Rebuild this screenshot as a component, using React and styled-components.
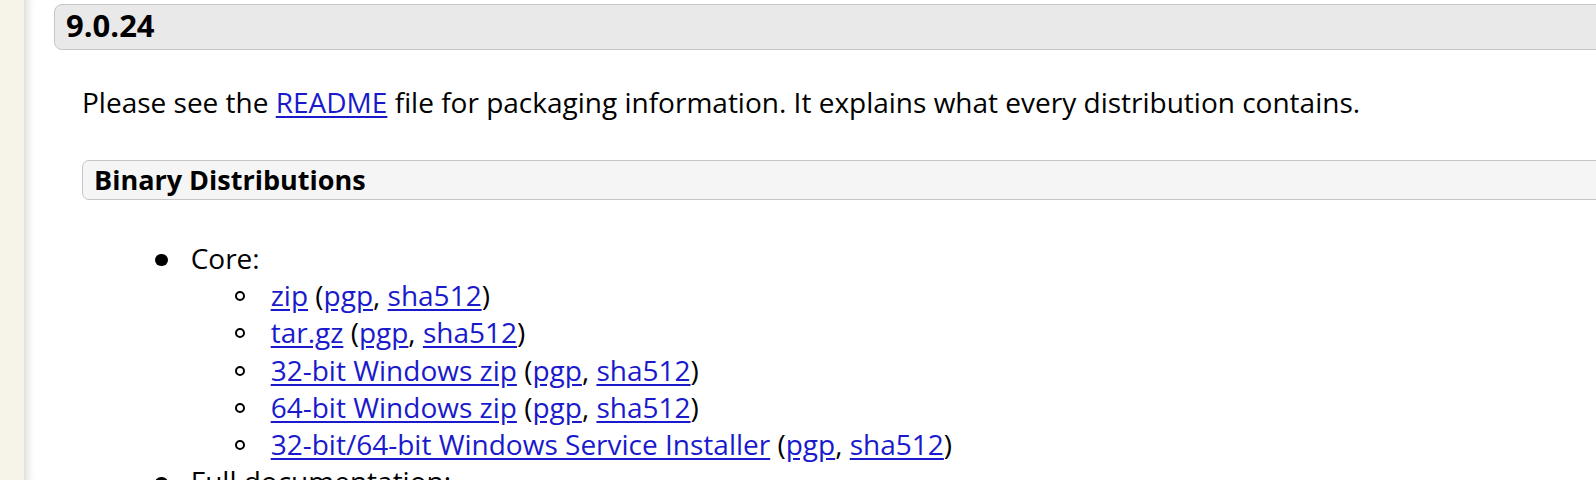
import React from "react";
import styled, { createGlobalStyle } from "styled-components";

const Global = createGlobalStyle`
  html, body { margin: 0; padding: 0; background: #fff; }
  body {
    font-family: "Open Sans", "Noto Sans", sans-serif;
    font-size: 28px;
    color: #000;
    overflow: hidden;
  }
`;

const Page = styled.div`
  display: flex;
  width: 1596px;
  height: 480px;
  overflow: hidden;
`;

const Sidebar = styled.div`
  flex: 0 0 24px;
  background: #f6f3e9;
`;

const Main = styled.main`
  flex: 1 1 auto;
  min-width: 0;
  background: #fff;
  box-shadow: inset 10px 0 9px -7px rgba(0, 0, 0, 0.16);
  padding: 4px 0 0 30px;
  margin-right: -60px;
`;

const VersionTitle = styled.h3`
  margin: 0;
  padding: 0 11px 3px;
  font-size: 31px;
  font-weight: 700;
  line-height: 41px;
  background: #e9e9e9;
  border: 1px solid #c6c6c6;
  border-radius: 8px 0 0 8px;
`;

const Section = styled.div`
  padding-left: 28px;
`;

const Para = styled.p`
  margin: 34px 0 39px 0;
  line-height: 37.2px;
`;

const SubTitle = styled.h4`
  margin: 0;
  padding: 0 11px;
  font-size: 27px;
  font-weight: 700;
  line-height: 38px;
  background: #f5f5f5;
  border: 1px solid #c6c6c6;
  border-radius: 7px 0 0 7px;
`;

const List = styled.ul`
  margin: 40px 0 0 0;
  padding-left: 108.7px;
  line-height: 37.3px;
  list-style: none;
`;

const Item = styled.li`
  position: relative;
  &::before {
    content: "";
    position: absolute;
    left: -35.7px;
    top: 13.5px;
    width: 12.5px;
    height: 12.5px;
    border-radius: 50%;
    background: #000;
  }
`;

const SubList = styled.ul`
  margin: -0.5px 0 0 0;
  padding-left: 80px;
  list-style: none;
`;

const SubItem = styled.li`
  position: relative;
  &::before {
    content: "";
    position: absolute;
    left: -36px;
    top: 14px;
    width: 6px;
    height: 6px;
    border-radius: 50%;
    border: 2.2px solid #000;
  }
`;

const Link = styled.a`
  color: #1a1acc;
  text-decoration: underline;
  text-underline-offset: 3px;
`;

const items = [
  "zip",
  "tar.gz",
  "32-bit Windows zip",
  "64-bit Windows zip",
  "32-bit/64-bit Windows Service Installer",
];

export default function App() {
  return (
    <>
      <Global />
      <Page>
        <Sidebar />
        <Main>
          <VersionTitle>9.0.24</VersionTitle>
          <Section>
            <Para>
              Please see the <Link href="#">README</Link> file for packaging
              information. It explains what every distribution contains.
            </Para>
            <SubTitle>Binary Distributions</SubTitle>
            <List>
              <Item>
                Core:
                <SubList>
                  {items.map((t) => (
                    <SubItem key={t}>
                      <Link href="#">{t}</Link> (<Link href="#">pgp</Link>,{" "}
                      <Link href="#">sha512</Link>)
                    </SubItem>
                  ))}
                </SubList>
              </Item>
              <Item>Full documentation:</Item>
            </List>
          </Section>
        </Main>
      </Page>
    </>
  );
}
